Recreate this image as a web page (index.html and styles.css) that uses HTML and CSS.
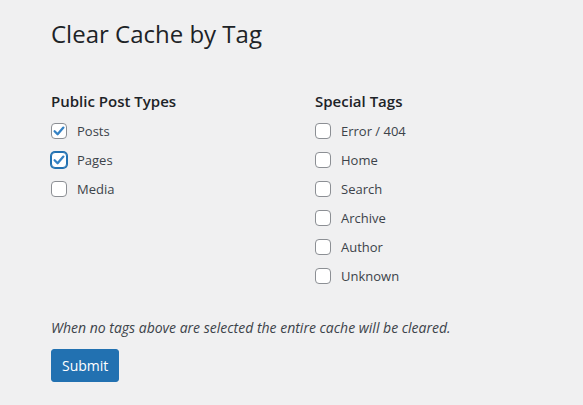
FILE: index.html
```html
<!DOCTYPE html>
<html lang="en">
<head>
<meta charset="utf-8">
<title>Clear Cache by Tag</title>
<link rel="stylesheet" href="styles.css">
</head>
<body>
<div class="wrap">
  <h1 class="title">Clear Cache by Tag</h1>
  <div class="cols">
    <div class="col">
      <h2 class="col-title">Public Post Types</h2>
      <label class="opt"><span class="cb"><svg viewBox="0 0 16 16" width="16" height="16"><path d="M3.6 8.2 L6.6 11.2 L12.4 4.6" fill="none" stroke="#3582c4" stroke-width="2.3" stroke-linecap="round" stroke-linejoin="round"/></svg></span>Posts</label>
      <label class="opt"><span class="cb cb-focus"><svg viewBox="0 0 16 16" width="16" height="16"><path d="M3.6 8.2 L6.6 11.2 L12.4 4.6" fill="none" stroke="#3582c4" stroke-width="2.3" stroke-linecap="round" stroke-linejoin="round"/></svg></span>Pages</label>
      <label class="opt"><span class="cb"></span>Media</label>
    </div>
    <div class="col">
      <h2 class="col-title">Special Tags</h2>
      <label class="opt"><span class="cb"></span>Error / 404</label>
      <label class="opt"><span class="cb"></span>Home</label>
      <label class="opt"><span class="cb"></span>Search</label>
      <label class="opt"><span class="cb"></span>Archive</label>
      <label class="opt"><span class="cb"></span>Author</label>
      <label class="opt"><span class="cb"></span>Unknown</label>
    </div>
  </div>
  <p class="note">When no tags above are selected the entire cache will be cleared.</p>
  <button class="btn" type="button">Submit</button>
</div>
</body>
</html>
```
FILE: styles.css
```css
html, body {
  margin: 0;
  padding: 0;
  background: #f0f0f1;
}
body {
  font-family: "Open Sans", "Noto Sans", sans-serif;
  color: #1d2327;
  font-size: 13px;
}
.wrap {
  padding: 18px 0 0 51px;
}
.title {
  margin: 0;
  font-size: 24px;
  font-weight: 400;
  line-height: 32px;
}
.cols {
  display: grid;
  grid-template-columns: 264px auto;
  margin-top: 41px;
}
.col {
  display: flex;
  flex-direction: column;
}
.col-title {
  margin: 0 0 5px;
  font-size: 15px;
  font-weight: 600;
  line-height: 20px;
}
.opt {
  display: flex;
  align-items: center;
  gap: 10px;
  height: 29px;
  font-size: 13px;
  color: #3c434a;
}
.cb {
  box-sizing: border-box;
  width: 16px;
  height: 16px;
  border: 1px solid #8c8f94;
  border-radius: 4px;
  background: #fff;
  display: flex;
  align-items: center;
  justify-content: center;
}
.cb svg {
  display: block;
  flex: none;
}
.cb-focus {
  border-color: #2271b1;
  box-shadow: 0 0 0 1px #2271b1;
}
.note {
  margin: 28px 0 0;
  font-style: italic;
  font-size: 14px;
  line-height: 20px;
  color: #3c434a;
}
.btn {
  margin-top: 11px;
  font-family: inherit;
  font-size: 14px;
  background: #2271b1;
  color: #fff;
  border: 1px solid #2271b1;
  border-radius: 3px;
  height: 33px;
  padding: 0 10px;
  cursor: pointer;
}
```
